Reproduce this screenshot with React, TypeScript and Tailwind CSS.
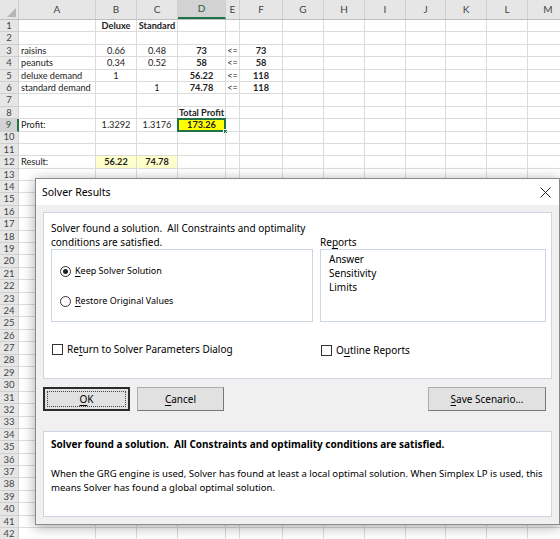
import React from 'react'

const COLS = [
  { k: 'A', w: 'w-[77px]', align: 'left' },
  { k: 'B', w: 'w-[41px]', align: 'center' },
  { k: 'C', w: 'w-[41px]', align: 'center' },
  { k: 'D', w: 'w-[48px]', align: 'center' },
  { k: 'E', w: 'w-[14px]', align: 'center' },
  { k: 'F', w: 'w-[43px]', align: 'center' },
  { k: 'G', w: 'w-[41px]', align: 'center' },
  { k: 'H', w: 'w-[41px]', align: 'center' },
  { k: 'I', w: 'w-[41px]', align: 'center' },
  { k: 'J', w: 'w-[40px]', align: 'center' },
  { k: 'K', w: 'w-[41px]', align: 'center' },
  { k: 'L', w: 'w-[41px]', align: 'center' },
  { k: 'M', w: 'w-[41px]', align: 'center' },
]

type Cell = { v: string; bold?: boolean; bg?: string; sel?: boolean }

const DATA: Record<number, Record<string, Cell>> = {
  1: { B: { v: 'Deluxe', bold: true }, C: { v: 'Standard', bold: true } },
  3: { A: { v: 'raisins' }, B: { v: '0.66' }, C: { v: '0.48' }, D: { v: '73', bold: true }, E: { v: '<=' }, F: { v: '73', bold: true } },
  4: { A: { v: 'peanuts' }, B: { v: '0.34' }, C: { v: '0.52' }, D: { v: '58', bold: true }, E: { v: '<=' }, F: { v: '58', bold: true } },
  5: { A: { v: 'deluxe demand' }, B: { v: '1' }, D: { v: '56.22', bold: true }, E: { v: '<=' }, F: { v: '118', bold: true } },
  6: { A: { v: 'standard demand' }, C: { v: '1' }, D: { v: '74.78', bold: true }, E: { v: '<=' }, F: { v: '118', bold: true } },
  8: { D: { v: 'Total Profit', bold: true } },
  9: { A: { v: 'Profit:' }, B: { v: '1.3292' }, C: { v: '1.3176' }, D: { v: '173.26', bold: true, sel: true } },
  12: { A: { v: 'Result:' }, B: { v: '56.22', bold: true, bg: 'light' }, C: { v: '74.78', bold: true, bg: 'light' } },
}

const rows = Array.from({ length: 42 }, (_, i) => i + 1)

function Sheet() {
  return (
    <div className="font-['Lato','Liberation_Sans',sans-serif] text-[9.2px] text-[#222]">
      <div className="flex h-[20px] border-b border-[#bdbdbd] bg-[#e6e6e6]">
        <div className="relative w-[19px] shrink-0 border-r border-[#cfcfcf]">
          <div className="absolute bottom-[2px] right-[2px] h-0 w-0 border-b-[9px] border-l-[9px] border-b-[#b5b5b5] border-l-transparent" />
        </div>
        {COLS.map((c) => (
          <div
            key={c.k}
            className={`${c.w} flex shrink-0 items-center justify-center border-r border-[#d0d0d0] text-[10px] ${
              c.k === 'D' ? 'border-b-2 border-b-[#217346] bg-[#d2d2d2] text-[#1e5e39]' : 'text-[#444]'
            }`}
          >
            {c.k}
          </div>
        ))}
      </div>
      {rows.map((r) => (
        <div key={r} className="flex h-[12.4px]">
          <div
            className={`flex w-[19px] shrink-0 items-center justify-center border-b border-r border-[#d0d0d0] text-[9.5px] leading-none ${
              r === 9 ? 'border-r-2 border-r-[#217346] bg-[#d2d2d2] text-[#1e5e39]' : 'bg-[#e6e6e6] text-[#444]'
            }`}
          >
            {r}
          </div>
          {COLS.map((c) => {
            const cell = DATA[r]?.[c.k]
            return (
              <div
                key={c.k}
                className={`${c.w} relative flex shrink-0 items-center overflow-visible whitespace-nowrap border-b border-r border-[#dcdcdc] leading-none ${
                  c.align === 'left' ? 'justify-start pl-[2px]' : 'justify-center'
                } ${cell?.bold ? 'font-bold' : ''} ${cell?.bg === 'light' ? 'bg-[#ffffcc]' : ''} ${
                  cell?.sel ? 'bg-[#ffff00]' : ''
                }`}
              >
                {cell?.v}
                {cell?.sel && (
                  <>
                    <div className="absolute -left-[1px] -top-[1px] h-[13.4px] w-[49px] border-2 border-[#217346]" />
                    <div className="absolute -bottom-[3px] -right-[3px] h-[5px] w-[5px] border border-white bg-[#217346]" />
                  </>
                )}
              </div>
            )
          })}
        </div>
      ))}
    </div>
  )
}

function U({ children }: { children: React.ReactNode }) {
  return <span className="underline underline-offset-2">{children}</span>
}

function Radio({ on }: { on?: boolean }) {
  return (
    <span className="flex h-[11px] w-[11px] shrink-0 items-center justify-center rounded-full border border-[#333] bg-white">
      {on && <span className="h-[5px] w-[5px] rounded-full bg-[#222]" />}
    </span>
  )
}

function Check() {
  return <span className="h-[11px] w-[11px] shrink-0 border border-[#333] bg-white" />
}

function Btn({ children, w, def }: { children: React.ReactNode; w: string; def?: boolean }) {
  return (
    <div
      className={`${w} relative flex h-[24px] items-center justify-center bg-[#e1e1e1] ${
        def ? 'border-2 border-[#2b2b2b]' : 'border border-[#adadad] border-b-[#777] border-r-[#777]'
      }`}
    >
      {def && <div className="absolute inset-[2px] border border-dotted border-[#444]" />}
      {children}
    </div>
  )
}

function Dialog() {
  return (
    <div className="absolute left-[35px] top-[178px] w-[525px] border border-[#8a8a8a] bg-[#f0f0f0] font-['Noto_Sans','Open_Sans',sans-serif] text-[10px] leading-[14px] text-black shadow-[0_2px_12px_rgba(0,0,0,0.35)]">
      <div className="flex h-[26px] items-center justify-between bg-white pl-[6px] pr-[8px] text-[10.5px]">
        <span>Solver Results</span>
        <svg width="11" height="11" viewBox="0 0 11 11" className="text-[#222]">
          <path d="M0.5 0.5 L10.5 10.5 M10.5 0.5 L0.5 10.5" stroke="currentColor" strokeWidth="1" />
        </svg>
      </div>
      <div className="px-[7px] pb-[7px] pt-[7px]">
        <div className="h-[167px] border border-[#cbd6e2] bg-white pl-[7px] pt-[8px]">
          <div className="flex gap-[7px]">
            <div className="w-[262px]">
              <div className="whitespace-nowrap">
                Solver found a solution.&nbsp; All Constraints and optimality
                <br />
                conditions are satisfied.
              </div>
              <div className="flex h-[73px] flex-col gap-[14px] border border-[#cbd6e2] pl-[8px] pt-[13px] text-[9px]">
                <div className="flex h-[16px] items-center gap-[4px]">
                  <Radio on />
                  <span>
                    <U>K</U>eep Solver Solution
                  </span>
                </div>
                <div className="flex h-[16px] items-center gap-[4px]">
                  <Radio />
                  <span>
                    <U>R</U>estore Original Values
                  </span>
                </div>
              </div>
            </div>
            <div className="w-[226px]">
              <div className="h-[14px]" />
              <div>
                Re<U>p</U>orts
              </div>
              <div className="flex h-[73px] flex-col border border-[#cbd6e2] pl-[8px] pt-[2px]">
                <span>Answer</span>
                <span>Sensitivity</span>
                <span>Limits</span>
              </div>
            </div>
          </div>
          <div className="mt-[19px] flex gap-[7px]">
            <div className="flex h-[16px] w-[262px] items-center gap-[4px] pl-[1px]">
              <Check />
              <span>
                Re<U>t</U>urn to Solver Parameters Dialog
              </span>
            </div>
            <div className="flex h-[16px] items-center gap-[4px] pl-[1px] pt-[2px]">
              <Check />
              <span>
                O<U>u</U>tline Reports
              </span>
            </div>
          </div>
        </div>
        <div className="mt-[8px] flex gap-[7px]">
          <Btn w="w-[87px]" def>
            <span>
              <U>O</U>K
            </span>
          </Btn>
          <Btn w="w-[87px]">
            <span>
              <U>C</U>ancel
            </span>
          </Btn>
          <div className="ml-auto mr-[6px]">
            <Btn w="w-[118px]">
              <span>
                <U>S</U>ave Scenario...
              </span>
            </Btn>
          </div>
        </div>
        <div className="mt-[20px] h-[86px] whitespace-nowrap border border-[#cbd6e2] bg-white px-[7px] pt-[5px]">
          <div className="font-bold">Solver found a solution.&nbsp; All Constraints and optimality conditions are satisfied.</div>
          <div className="mt-[16px] text-[9.55px]">
            When the GRG engine is used, Solver has found at least a local optimal solution. When Simplex LP is used, this
            <br />
            means Solver has found a global optimal solution.
          </div>
        </div>
      </div>
    </div>
  )
}

export default function App() {
  return (
    <div className="relative h-[539px] w-[560px] overflow-hidden bg-white">
      <Sheet />
      <Dialog />
    </div>
  )
}
